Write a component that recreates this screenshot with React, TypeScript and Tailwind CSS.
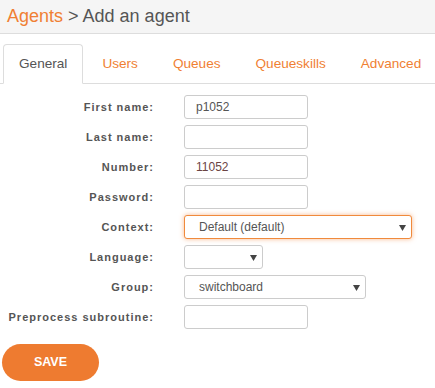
import React from "react";

const tabs = ["General", "Users", "Queues", "Queueskills", "Advanced"];

const Caret = () => (
  <svg width="7" height="7" viewBox="0 0 7 7" className="shrink-0">
    <path d="M0 1h7L3.5 7z" fill="#444" />
  </svg>
);

const Label = ({ children }: { children: React.ReactNode }) => (
  <label className="w-[154px] shrink-0 text-right text-[11px] font-bold tracking-[1px] text-[#555]">
    {children}
  </label>
);

const TextInput = ({ value = "", className = "" }: { value?: string; className?: string }) => (
  <div
    className={`flex h-6 w-[124px] items-center rounded-[3px] border border-[#ccc] bg-white pl-[11px] text-[12px] ${className}`}
  >
    {value}
  </div>
);

const Select = ({
  value = "",
  width,
  focus = false,
}: {
  value?: string;
  width: string;
  focus?: boolean;
}) => (
  <div
    className={`flex h-6 items-center justify-between rounded-[3px] border bg-white pl-[14px] pr-[5px] text-[12px] text-[#555] ${width} ${
      focus
        ? "border-[#f08a3c] shadow-[0_0_5px_rgba(240,125,50,0.55)]"
        : "border-[#ccc]"
    }`}
  >
    <span>{value}</span>
    <Caret />
  </div>
);

const Row = ({ label, children }: { label: string; children: React.ReactNode }) => (
  <div className="flex items-center gap-[30px]">
    <Label>{label}</Label>
    {children}
  </div>
);

export default function App() {
  return (
    <div
      className="h-[388px] w-[435px] overflow-hidden bg-white"
      style={{ fontFamily: '"Liberation Sans", Arial, sans-serif' }}
    >
      {/* header */}
      <div className="flex h-[34px] items-center border-b border-[#ddd] bg-[#f5f5f5] pl-[7px] text-[18px]">
        <span className="text-[#f07f33]">Agents</span>
        <span className="ml-[5px] text-[#555]">&gt; Add an agent</span>
      </div>

      {/* tabs */}
      <div className="mt-[10px] flex border-b border-[#ddd]">
        {tabs.map((t, i) => (
          <div
            key={t}
            className={`-mb-px ml-[3px] rounded-t-[4px] border px-[15px] py-[9px] text-[13.6px] leading-5 ${
              i === 0
                ? "border-[#ddd] border-b-white bg-white text-[#555]"
                : "border-transparent text-[#f07f33]"
            }`}
          >
            {t}
          </div>
        ))}
      </div>

      {/* form */}
      <div className="mt-[11px] flex flex-col gap-[6px]">
        <Row label="First name:">
          <TextInput value="p1052" className="text-[#555]" />
        </Row>
        <Row label="Last name:">
          <TextInput />
        </Row>
        <Row label="Number:">
          <TextInput value="11052" className="text-[#6b4444]" />
        </Row>
        <Row label="Password:">
          <TextInput />
        </Row>
        <Row label="Context:">
          <Select value="Default (default)" width="w-[228px]" focus />
        </Row>
        <Row label="Language:">
          <Select width="w-[79px]" />
        </Row>
        <Row label="Group:">
          <Select value="switchboard" width="w-[182px]" />
        </Row>
        <Row label="Preprocess subroutine:">
          <TextInput />
        </Row>
      </div>

      <div className="mt-[15px] pl-[2px]">
        <button className="h-[37px] w-[97px] rounded-full bg-[#ee7b30] text-[12.5px] font-bold text-white">
          SAVE
        </button>
      </div>
    </div>
  );
}
